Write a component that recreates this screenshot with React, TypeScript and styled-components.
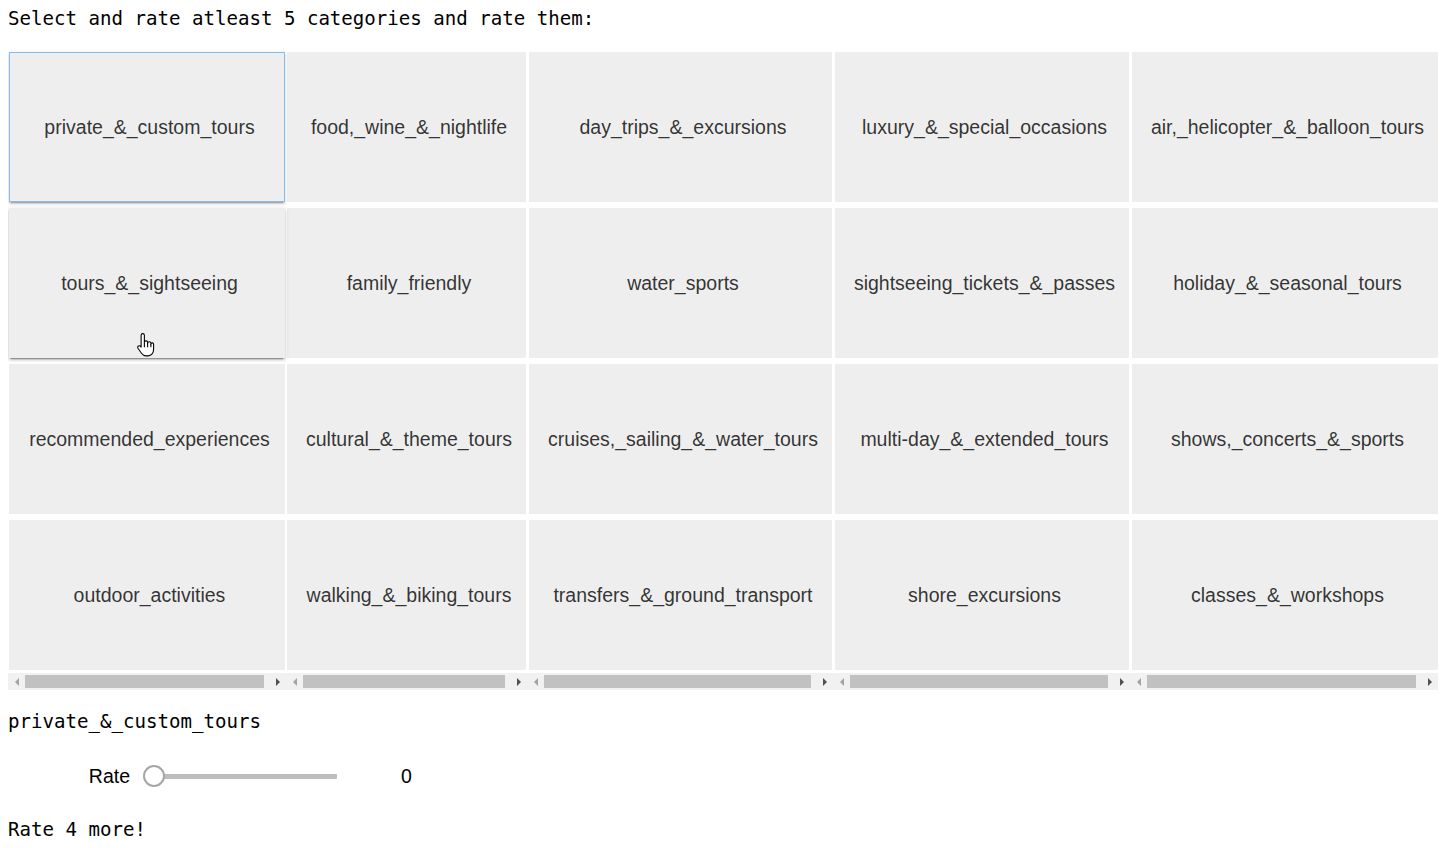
import React from "react";
import styled, { createGlobalStyle, css } from "styled-components";

const GlobalStyle = createGlobalStyle`
  html, body { background: #ffffff; }
  body {
    margin: 8px;
    font-family: "Liberation Sans", Arial, sans-serif;
    color: #000;
  }
`;

const MONO = `"DejaVu Sans Mono", "Liberation Mono", monospace`;

const Page = styled.div`
  display: flex;
  flex-direction: column;
  width: 1430px;
  padding-top: 1px;
`;

const MonoLine = styled.div<{ $top?: number }>`
  font-family: ${MONO};
  font-size: 19.1px;
  line-height: 20px;
  height: 20px;
  white-space: pre;
  color: #000;
  margin-top: ${(p) => p.$top ?? 0}px;
`;

const Columns = styled.div`
  display: flex;
  margin-top: 23px;
`;

const Column = styled.div<{ $width: number }>`
  display: flex;
  flex-direction: column;
  width: ${(p) => p.$width}px;
  flex: none;
`;

const ColumnBody = styled.div<{ $inset: number }>`
  display: flex;
  flex-direction: column;
  gap: 6px;
  padding-left: ${(p) => p.$inset}px;
`;

type BtnState = "focus" | "hover" | undefined;

const CategoryButton = styled.button<{ $width: number; $state?: BtnState }>`
  position: relative;
  box-sizing: border-box;
  width: ${(p) => p.$width}px;
  height: 150px;
  margin: 0;
  padding: 0 8px 0 13px;
  border: 0;
  background: #eeeeee;
  color: rgba(0, 0, 0, 0.8);
  font-family: "Liberation Sans", Arial, sans-serif;
  font-size: 19.5px;
  white-space: nowrap;
  text-align: center;
  cursor: pointer;
  outline: none;
  ${(p) =>
    p.$state === "focus" &&
    css`
      outline: 1px solid #82bdee;
      outline-offset: -1px;
      box-shadow: 0 2px 2px 0 rgba(0, 0, 0, 0.14), 0 3px 1px -2px rgba(0, 0, 0, 0.2),
        0 1px 4px 0 rgba(0, 0, 0, 0.1);
      z-index: 1;
    `}
  ${(p) =>
    p.$state === "hover" &&
    css`
      box-shadow: 0 2px 2px 0 rgba(0, 0, 0, 0.16), 0 3px 1px -2px rgba(0, 0, 0, 0.26),
        0 1px 5px 0 rgba(0, 0, 0, 0.16);
      z-index: 1;
    `}
`;

const Pointer = styled.svg`
  position: absolute;
  left: 127px;
  top: 124px;
  width: 20px;
  height: 26px;
  pointer-events: none;
`;

const ScrollBar = styled.div`
  display: flex;
  align-items: stretch;
  height: 17px;
  margin-top: 3px;
  background: #f1f1f1;
`;

const ArrowBox = styled.div`
  width: 17px;
  flex: none;
  display: flex;
  align-items: center;
  justify-content: center;
`;

const Triangle = styled.span<{ $dir: "left" | "right" }>`
  width: 0;
  height: 0;
  border-top: 4px solid transparent;
  border-bottom: 4px solid transparent;
  ${(p) =>
    p.$dir === "left"
      ? css`
          border-right: 4px solid #a3a3a3;
        `
      : css`
          border-left: 4px solid #505050;
        `}
`;

const Thumb = styled.div`
  flex: 1;
  margin: 2px 5px 2px 0;
  background: #c1c1c1;
`;

const SliderRow = styled.div`
  display: flex;
  align-items: center;
  height: 30px;
  margin-top: 29px;
`;

const SliderLabel = styled.div`
  width: 122px;
  text-align: right;
  font-family: "Liberation Sans", Arial, sans-serif;
  font-size: 19.5px;
  color: #000;
  flex: none;
`;

const SliderTrack = styled.div`
  position: relative;
  margin-left: 13px;
  width: 194px;
  height: 22px;
  display: flex;
  align-items: center;
  flex: none;
`;

const TrackLine = styled.div`
  margin-left: 11px;
  flex: 1;
  height: 5px;
  background: #bdbdbd;
  border-radius: 1px;
`;

const Handle = styled.div`
  position: absolute;
  left: 0;
  top: 0;
  box-sizing: border-box;
  width: 22px;
  height: 22px;
  border-radius: 50%;
  background: #ffffff;
  border: 2px solid #a6a6a6;
`;

const SliderValue = styled.div`
  margin-left: 64px;
  font-family: "Liberation Sans", Arial, sans-serif;
  font-size: 19.5px;
  color: #000;
`;

type Col = { width: number; inset: number; btn: number; items: string[] };

const columns: Col[] = [
  {
    width: 278,
    inset: 1,
    btn: 276,
    items: ["private_&_custom_tours", "tours_&_sightseeing", "recommended_experiences", "outdoor_activities"],
  },
  {
    width: 241,
    inset: 1,
    btn: 239,
    items: ["food,_wine_&_nightlife", "family_friendly", "cultural_&_theme_tours", "walking_&_biking_tours"],
  },
  {
    width: 306,
    inset: 2,
    btn: 303,
    items: ["day_trips_&_excursions", "water_sports", "cruises,_sailing_&_water_tours", "transfers_&_ground_transport"],
  },
  {
    width: 297,
    inset: 2,
    btn: 294,
    items: ["luxury_&_special_occasions", "sightseeing_tickets_&_passes", "multi-day_&_extended_tours", "shore_excursions"],
  },
  {
    width: 308,
    inset: 2,
    btn: 306,
    items: ["air,_helicopter_&_balloon_tours", "holiday_&_seasonal_tours", "shows,_concerts_&_sports", "classes_&_workshops"],
  },
];

const HandCursor = () => (
  <Pointer viewBox="0 0 18 24">
    <path
      d="M6 1.5 C6.8 1.5 7.5 2.1 7.5 3 V9.5 C7.5 8.7 8.2 8.2 9 8.2 C9.8 8.2 10.5 8.7 10.5 9.5 V10.2 C10.5 9.5 11.2 9 12 9 C12.8 9 13.5 9.5 13.5 10.3 V11 C13.5 10.4 14.1 10 14.8 10 C15.5 10 16 10.5 16 11.2 V16 C16 19.2 14 22 11 22 H9 C7 22 5.8 21 4.8 19.6 L1.6 15 C1.1 14.2 1.3 13.3 2 12.9 C2.7 12.5 3.6 12.7 4.1 13.4 L4.5 14 V3 C4.5 2.1 5.2 1.5 6 1.5 Z"
      fill="#ffffff"
      stroke="#000000"
      strokeWidth="1"
      strokeLinejoin="round"
    />
    <path d="M7.5 9.5 V14 M10.5 10.2 V14 M13.5 11 V14" stroke="#000000" strokeWidth="1" fill="none" />
  </Pointer>
);

export default function App() {
  return (
    <>
      <GlobalStyle />
      <Page>
        <MonoLine>Select and rate atleast 5 categories and rate them:</MonoLine>
        <Columns>
          {columns.map((col, ci) => (
            <Column key={ci} $width={col.width}>
              <ColumnBody $inset={col.inset}>
                {col.items.map((name, ri) => {
                  const state: BtnState =
                    ci === 0 && ri === 0 ? "focus" : ci === 0 && ri === 1 ? "hover" : undefined;
                  return (
                    <CategoryButton key={name} $width={col.btn} $state={state}>
                      {name}
                      {state === "hover" && <HandCursor />}
                    </CategoryButton>
                  );
                })}
              </ColumnBody>
              <ScrollBar>
                <ArrowBox>
                  <Triangle $dir="left" />
                </ArrowBox>
                <Thumb />
                <ArrowBox>
                  <Triangle $dir="right" />
                </ArrowBox>
              </ScrollBar>
            </Column>
          ))}
        </Columns>
        <MonoLine $top={22}>private_&amp;_custom_tours</MonoLine>
        <SliderRow>
          <SliderLabel>Rate</SliderLabel>
          <SliderTrack>
            <TrackLine />
            <Handle />
          </SliderTrack>
          <SliderValue>0</SliderValue>
        </SliderRow>
        <MonoLine $top={29}>Rate 4 more!</MonoLine>
      </Page>
    </>
  );
}
